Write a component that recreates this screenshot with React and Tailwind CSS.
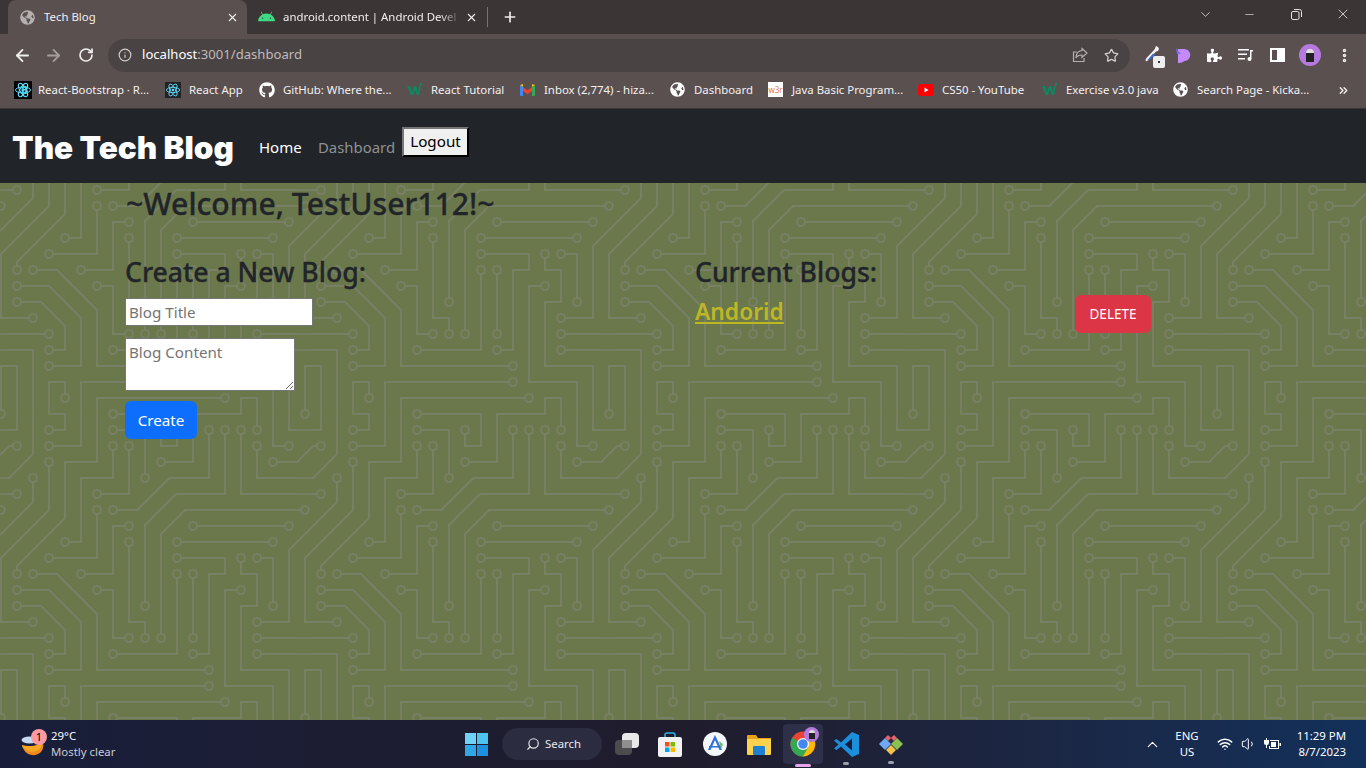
import React from "react";
import { ArrowLeft, ArrowRight, RotateCw, Info, Star, Plus, X, ChevronDown, Minus, ChevronUp, ChevronsRight, EllipsisVertical, Search, Volume1, Wifi } from "lucide-react";
import { FaGithub, FaAndroid, FaGlobeAmericas, FaPuzzlePiece } from "react-icons/fa";

const circuit =
  "M44.1 224a5 5 0 1 1 0 2H0v-2h44.1zm160 48a5 5 0 1 1 0 2H82v-2h122.1zm57.8-46a5 5 0 1 1 0-2H304v2h-42.1zm0 16a5 5 0 1 1 0-2H304v2h-42.1zm6.2-114a5 5 0 1 1 0 2h-86.2a5 5 0 1 1 0-2h86.2zm-256-48a5 5 0 1 1 0 2H0v-2h12.1zm185.8 34a5 5 0 1 1 0-2h86.2a5 5 0 1 1 0 2h-86.2zM258 12.1a5 5 0 1 1-2 0V0h2v12.1zm-64 208a5 5 0 1 1-2 0v-54.2a5 5 0 1 1 2 0v54.2zm48-198.2V80h62v2h-64V21.9a5 5 0 1 1 2 0zm16 16V64h46v2h-48V37.9a5 5 0 1 1 2 0zm-128 96V208h16v12.1a5 5 0 1 1-2 0V210h-16v-76.1a5 5 0 1 1 2 0zm-5.9-21.9a5 5 0 1 1 0 2H114v48H85.9a5 5 0 1 1 0-2H112v-48h12.1zm-6.2 130a5 5 0 1 1 0-2H176v-74.1a5 5 0 1 1 2 0V242h-60.1zm-16-64a5 5 0 1 1 0-2H114v48h10.1a5 5 0 1 1 0 2H112v-48h-10.1zM66 284.1a5 5 0 1 1-2 0V274H50v30h-2v-32h18v12.1zM236.1 176a5 5 0 1 1 0 2H226v94h48v32h-2v-30h-48v-98h12.1zm25.8-30a5 5 0 1 1 0-2H274v44.1a5 5 0 1 1-2 0V146h-10.1zm-64 96a5 5 0 1 1 0-2H208v-80h16v-14h-42.1a5 5 0 1 1 0-2H226v18h-16v80h-12.1zm86.2-210a5 5 0 1 1 0 2H272V0h2v32h10.1zM98 101.9V146H53.9a5 5 0 1 1 0-2H96v-42.1a5 5 0 1 1 2 0zM53.9 34a5 5 0 1 1 0-2H80V0h2v34H53.9zm60.1 3.9V66H82v64H69.9a5 5 0 1 1 0-2H80V64h32V37.9a5 5 0 1 1 2 0zM101.9 82a5 5 0 1 1 0-2H128V37.9a5 5 0 1 1 2 0V82h-28.1zm16-64a5 5 0 1 1 0-2H146v44.1a5 5 0 1 1-2 0V18h-26.1zm102.2 270a5 5 0 1 1 0 2H98v14h-2v-16h124.1zM242 149.9V160h16v34h-16v62h48v48h-2v-46h-48v-66h16v-30h-16v-12.1a5 5 0 1 1 2 0zM53.9 18a5 5 0 1 1 0-2H64V2H48V0h18v18H53.9zm112 32a5 5 0 1 1 0-2H192V0h50v2h-48v48h-28.1zm-48-48a5 5 0 0 1-9.8-2h2.07a3 3 0 1 0 5.66 0H178v34h-18V21.9a5 5 0 1 1 2 0V32h14V2h-58.1zm0 96a5 5 0 1 1 0-2H137l32-32h39V21.9a5 5 0 1 1 2 0V66h-40.17l-32 32H117.9zm28.1 90.1a5 5 0 1 1-2 0v-76.51L175.59 80H224V21.9a5 5 0 1 1 2 0V82h-49.59L146 112.41v75.69zm16 32a5 5 0 1 1-2 0v-99.51L184.59 96H300.1a5 5 0 0 1 3.9-3.9v2.07a3 3 0 0 0 0 5.66v2.07a5 5 0 0 1-3.9-3.9H185.41L162 121.41v98.69zm-144-64a5 5 0 1 1-2 0v-3.51l48-48V48h32V0h2v50H66v55.41l-48 48v2.69zM50 53.9v43.51l-48 48V208h26.1a5 5 0 1 1 0 2H0v-65.41l48-48V53.9a5 5 0 1 1 2 0zm-16 16V89.41l-34 34v-2.82l32-32V69.9a5 5 0 1 1 2 0zM12.1 32a5 5 0 1 1 0 2H9.41L0 43.41V40.6L8.59 32h3.51zm265.8 18a5 5 0 1 1 0-2h18.69l7.41-7.41v2.82L297.41 50H277.9zm-16 160a5 5 0 1 1 0-2H288v-71.41l16-16v2.82l-14 14V210h-28.1zm-208 32a5 5 0 1 1 0-2H64v-22.59L40.59 194H21.9a5 5 0 1 1 0-2H41.41L66 216.59V242H53.9zm150.2 14a5 5 0 1 1 0 2H96v-56.6L56.6 162H37.9a5 5 0 1 1 0-2h19.5L98 200.6V256h106.1zm-150.2 2a5 5 0 1 1 0-2H80v-46.59L48.59 178H21.9a5 5 0 1 1 0-2H49.41L82 208.59V258H53.9zM34 39.8v1.61L9.41 66H0v-2h8.59L32 40.59V0h2v39.8zM2 300.1a5 5 0 0 1 3.9 3.9H3.83A3 3 0 0 0 0 302.17V256h18v48h-2v-46H2v42.1zM34 241v63h-2v-62H0v-2h34v1zM17 18H0v-2h16V0h2v18h-1zm273-2h14v2h-16V0h2v16zm-32 273v15h-2v-14h-14v14h-2v-16h18v1zM0 92.1A5.02 5.02 0 0 1 6 97a5 5 0 0 1-6 4.9v-2.07a3 3 0 1 0 0-5.66V92.1zM80 272h2v32h-2v-32zm37.9 32h-2.07a3 3 0 0 0-5.66 0h-2.07a5 5 0 0 1 9.8 0zM5.9 0A5.02 5.02 0 0 1 0 5.9V3.83A3 3 0 0 0 3.83 0H5.9zm294.2 0h2.07A3 3 0 0 0 304 3.83V5.9a5 5 0 0 1-3.9-5.9zm3.9 300.1v2.07a3 3 0 0 0-1.83 1.83h-2.07a5 5 0 0 1 3.9-3.9z";

// the pads in the path are solid, walk it and find each centre so they can be punched out
function padCentres(d) {
  const tokens = d.match(/[a-zA-Z]|-?\d*\.?\d+/g);
  const argCount = { m: 2, l: 2, h: 1, v: 1, a: 7, z: 0 };
  const centres = [];
  let x = 0;
  let y = 0;
  let sx = 0;
  let sy = 0;
  let cmd = "";
  let i = 0;
  while (i < tokens.length) {
    if (/[a-zA-Z]/.test(tokens[i])) cmd = tokens[i++];
    const rel = cmd === cmd.toLowerCase();
    const c = cmd.toLowerCase();
    if (c === "z") {
      x = sx;
      y = sy;
      continue;
    }
    const p = tokens.slice(i, i + argCount[c]).map(Number);
    i += argCount[c];
    if (c === "m" || c === "l") {
      x = rel ? x + p[0] : p[0];
      y = rel ? y + p[1] : p[1];
      if (c === "m") {
        sx = x;
        sy = y;
        cmd = rel ? "l" : "L";
      }
    } else if (c === "h") {
      x = rel ? x + p[0] : p[0];
    } else if (c === "v") {
      y = rel ? y + p[0] : p[0];
    } else {
      const ex = rel ? x + p[5] : p[5];
      const ey = rel ? y + p[6] : p[6];
      if (p[0] === 5 && p[3] === 1) {
        const mx = (x + ex) / 2;
        const my = (y + ey) / 2;
        const dx = ex - x;
        const dy = ey - y;
        const len = Math.hypot(dx, dy);
        const h = Math.sqrt(Math.max(0, 25 - (len * len) / 4));
        const sign = p[4] === p[3] ? -1 : 1;
        centres.push([mx + (sign * h * -dy) / len, my + (sign * h * dx) / len]);
      }
      x = ex;
      y = ey;
    }
  }
  return centres;
}

const pads = padCentres(circuit);

function W3() {
  return <span className="w-[15px] h-[15px] bg-white text-[8px] leading-[15px] text-center text-[#e8793a]">w3r</span>;
}

function Wr() {
  return (
    <svg width="16" height="13" viewBox="0 0 16 13">
      <path d="M0 3h3l2 6 2-6h2l2 6 1-6h2l-2 9h-2L8 7l-2 5H4z" fill="#0b8a5f" />
      <path d="M13 0h2v2.500h-2z" fill="#0b8a5f" />
    </svg>
  );
}

function Gmail() {
  return (
    <svg width="15" height="12" viewBox="0 0 15 12">
      <path d="M0 1l3 2v9H1a1 1 0 0 1-1-1z" fill="#4285f4" />
      <path d="M15 1l-3 2v9h2a1 1 0 0 0 1-1z" fill="#34a853" />
      <path d="M3 3v4l4.500 3.200L12 7V3L7.500 6.200z" fill="#ea4335" />
      <path d="M0 1l3 2V0zM15 1l-3 2V0z" fill="#fbbc04" />
    </svg>
  );
}

function Atom({ size, bg }) {
  return (
    <svg width={size} height={size} viewBox="0 0 18 18" style={{ background: bg }}>
      <g fill="none" stroke="#61dafb" strokeWidth="1">
        <ellipse cx="9" cy="9" rx="7.500" ry="3" />
        <ellipse cx="9" cy="9" rx="7.500" ry="3" transform="rotate(60 9 9)" />
        <ellipse cx="9" cy="9" rx="7.500" ry="3" transform="rotate(120 9 9)" />
      </g>
      <circle cx="9" cy="9" r="1.500" fill="#61dafb" />
    </svg>
  );
}

function Yt() {
  return (
    <svg width="16" height="12" viewBox="0 0 16 12">
      <rect width="16" height="12" rx="3" fill="#f00" />
      <path d="M6.500 3.500l4 2.500-4 2.500z" fill="#fff" />
    </svg>
  );
}

const bookmarks = [
  {
    label: "React-Bootstrap · R...",
    w: "w-[151px]",
    icon: (
      <span className="relative w-[17px] h-[18px]">
        <Atom size={18} bg="#000" />
        <span className="absolute left-[7px] top-[2px] text-[#4fd1e8] text-[11px] leading-[14px] font-bold">B</span>
      </span>
    ),
  },
  { label: "React App", w: "w-[94px]", icon: <Atom size={16} bg="#222" /> },
  { label: "GitHub: Where the...", w: "w-[148px]", icon: <FaGithub className="text-white" size={16} /> },
  { label: "React Tutorial", w: "w-[113px]", icon: <Wr /> },
  { label: "Inbox (2,774) - hiza...", w: "w-[150px]", icon: <Gmail /> },
  { label: "Dashboard", w: "w-[98px]", icon: <FaGlobeAmericas className="text-white" size={15} /> },
  { label: "Java Basic Program...", w: "w-[150px]", icon: <W3 /> },
  { label: "CS50 - YouTube", w: "w-[124px]", icon: <Yt /> },
  { label: "Exercise v3.0 java", w: "w-[131px]", icon: <Wr /> },
  { label: "Search Page - Kicka...", w: "w-[165px]", icon: <FaGlobeAmericas className="text-white" size={15} /> },
];

function TabStrip() {
  return (
    <div className="h-[34px] bg-[#3b3536] flex items-end pl-[8px] text-[11.4px] text-[#f1eeee]">
      <div className="w-[239px] h-[34px] bg-[#5a5050] rounded-t-lg flex items-center pl-[12px] pr-[8px]">
        <FaGlobeAmericas className="text-[#b5afaf] mr-[9px]" size={15} />
        <span className="flex-1">Tech Blog</span>
        <X size={13} strokeWidth={2} />
      </div>
      <div className="w-[240px] h-[34px] flex items-center pl-[11px] pr-[9px]">
        <FaAndroid className="text-[#3ddc84] mr-[8px]" size={17} />
        <span className="flex-1 whitespace-nowrap [mask-image:linear-gradient(to_right,black_88%,transparent)]">
          android.content | Android Devel
        </span>
        <X size={13} strokeWidth={2} className="ml-[4px]" />
      </div>
      <div className="w-px h-[20px] bg-[#7a7272] mb-[7px]" />
      <div className="h-[34px] flex items-center ml-[14px]">
        <Plus size={16} strokeWidth={2.5} />
      </div>
      <div className="ml-auto self-start h-[28px] flex items-center text-[#e6e2e2]">
        <ChevronDown size={15} strokeWidth={1.25} className="mr-[30px]" />
        <Minus size={13} strokeWidth={1.25} className="mr-[35px]" />
        <svg width="11" height="11" viewBox="0 0 11 11" fill="none" stroke="#e6e2e2" className="mr-[33px]">
          <rect x="0.500" y="2.500" width="7.500" height="8" rx="1.500" />
          <path d="M3 .5h5.500a2 2 0 0 1 2 2V8" />
        </svg>
        <X size={16} strokeWidth={1.25} className="mr-[15px]" />
      </div>
    </div>
  );
}

function Toolbar() {
  return (
    <div className="h-[38px] bg-[#5a5050] flex items-center pt-[4px] text-[#f1eeee]">
      <ArrowLeft size={19} strokeWidth={2.25} className="ml-[13px]" />
      <ArrowRight size={19} strokeWidth={2.25} className="ml-[12px] text-[#a59e9e]" />
      <RotateCw size={16} strokeWidth={2.5} className="ml-[15px]" />
      <div className="ml-[14px] w-[1022px] h-[33px] rounded-full bg-[#4a4343] flex items-center pl-[10px] pr-[10px]">
        <Info size={14} className="text-[#d3cfcf]" />
        <span className="ml-[10px] text-[13.1px] text-white flex-1">
          localhost<span className="text-[#c0baba]">:3001/dashboard</span>
        </span>
        <svg width="16" height="16" viewBox="0 0 16 16" fill="none" stroke="#b5afaf" strokeWidth="1.2" className="mr-[16px]">
          <path d="M10 1.500l5 4.500-5 4.500V8C7 8 5 9 4 11c0-4 2-7 6-7.500z" />
          <path d="M12 11v3.500H1.500V5H5" />
        </svg>
        <Star size={15} className="text-[#d3cfcf] mr-[1px]" />
      </div>
      <div className="relative ml-[14px] w-[20px] h-[20px]">
        <svg width="18" height="18" viewBox="0 0 18 18">
          <path d="M12 1l2 1 1 2-1 2-2 .500-8 9-2 1-.500-1.500 1-2 8-8.500z" fill="#f4f4f4" />
          <path d="M9 8.500L11 10l-6 5-2 .500z" fill="#3b6fd8" />
        </svg>
        <span className="absolute left-[9px] top-[11px] w-[12px] h-[12px] bg-[#eee] rounded-[2px] flex items-center justify-center">
          <span className="w-[2px] h-[2px] bg-[#333]" />
        </span>
      </div>
      <svg width="16" height="17" viewBox="0 0 16 17" className="ml-[11px]">
        <path d="M3 2h6a6 6 0 0 1 .500 12 8 8 0 0 1-6.500 2z" fill="#c58af9" />
        <path d="M1 1l5 6H2z" fill="#7d6cf0" />
      </svg>
      <FaPuzzlePiece size={15} className="ml-[16px] text-white" />
      <svg width="16" height="14" viewBox="0 0 16 14" className="ml-[16px]" fill="white">
        <path d="M0 1h11v1.500H0zM0 5.500h9V7H0zM0 10h7v1.500H0z" />
        <path d="M12 2h3v1.500h-1.500v7.500a2 2 0 1 1-1.500-2z" />
      </svg>
      <span className="ml-[16px] w-[15px] h-[14px] border-2 border-white flex justify-end">
        <span className="w-[6px] h-full bg-white" />
      </span>
      <span className="ml-[14px] w-[22px] h-[22px] rounded-full bg-[#b57ade] flex items-center justify-center">
        <span className="w-[8px] h-[13px] rounded-t-full bg-[#222] border-t-[4px] border-[#ddd]" />
      </span>
      <EllipsisVertical size={17} strokeWidth={3} className="ml-[15px]" />
    </div>
  );
}

function Bookmarks() {
  return (
    <div className="h-[36px] bg-[#5a5050] flex items-center pl-[14px] text-[11.4px] text-[#f4f1f1] border-b border-[#3b3536] box-content">
      {bookmarks.map((b) => (
        <div key={b.label} className={`${b.w} flex items-center shrink-0`}>
          <span className="w-[24px] flex items-center shrink-0">{b.icon}</span>
          <span className="whitespace-nowrap">{b.label}</span>
        </div>
      ))}
      <ChevronsRight size={13} strokeWidth={2.5} className="ml-[-1px]" />
    </div>
  );
}

function Navbar() {
  return (
    <nav className="h-[74px] bg-[#212529] flex items-start pl-[12px]">
      <span className="mt-[17px] font-['Inter',sans-serif] font-black text-[31.5px] leading-[44px] text-white w-[247px] whitespace-nowrap">
        The Tech Blog
      </span>
      <span className="mt-[26px] text-[15px] leading-[24px] text-white w-[59px]">Home</span>
      <span className="mt-[26px] text-[14.9px] leading-[24px] text-[#8f9193] w-[84px]">Dashboard</span>
      <button className="mt-[18px] w-[67px] h-[30px] pb-[2px] bg-[#f0f0f0] text-black text-[15.2px] leading-[22px] border-2 border-t-[#767676] border-l-[#767676] border-r-black border-b-black">
        Logout
      </button>
    </nav>
  );
}

function Dashboard() {
  return (
    <main className="relative flex-1 bg-[#6a784c] overflow-hidden text-[#212529]">
      <svg className="absolute inset-0 w-full h-full" aria-hidden="true">
        <defs>
          {/* tile starts at the top of the page body, 74px above this panel */}
          <pattern id="circuit" y="-74" width="304" height="304" patternUnits="userSpaceOnUse">
            <path d={circuit} fill="#7b8069" fillRule="evenodd" stroke="#6a784c" strokeWidth="0.3" />
            {pads.map(([cx, cy], i) => (
              <circle key={i} cx={cx} cy={cy} r="3.150" fill="#6a784c" />
            ))}
          </pattern>
        </defs>
        <rect width="100%" height="100%" fill="url(#circuit)" />
      </svg>
      <div className="relative pl-[125px]">
        <h2 className="text-[30.2px] leading-[42px] font-medium pl-px [-webkit-text-stroke:0.3px_#212529]">~Welcome, TestUser112!~</h2>
        <div className="flex mt-[26px]">
          <section className="w-[570px]">
            <h3 className="text-[26.6px] leading-[42px] font-medium [-webkit-text-stroke:0.3px_#212529]">Create a New Blog:</h3>
            <input
              placeholder="Blog Title"
              className="block w-[188px] h-[28px] mt-[5px] bg-white px-[3px] text-[15.2px] placeholder:text-[#757575] border border-[#767676]"
            />
            <textarea
              placeholder="Blog Content"
              className="block w-[170px] h-[53px] mt-[12px] bg-white px-[3px] py-[2px] text-[15.2px] placeholder:text-[#757575] border border-[#767676]"
            />
            <button className="block w-[72px] h-[38px] mt-[10px] bg-[#0d6efd] rounded-md text-white text-[15.2px]">Create</button>
          </section>
          <section className="w-[456px]">
            <h3 className="text-[26.6px] leading-[42px] font-medium [-webkit-text-stroke:0.3px_#212529]">Current Blogs:</h3>
            <div className="flex justify-between items-start mt-[1px]">
              <a className="text-[22.8px] leading-[36px] font-semibold text-[#bdb726] underline">Andorid</a>
              <button className="w-[76px] h-[38px] mt-[1px] bg-[#dc3545] rounded-md text-white text-[13.5px]">DELETE</button>
            </div>
          </section>
        </div>
      </div>
    </main>
  );
}

function Taskbar() {
  return (
    <footer className="h-[48px] bg-gradient-to-r from-[#181e3a] via-[#1f1c2c] to-[#12305a] flex items-center text-white text-[11.4px]">
      <div className="relative ml-[20px] w-[31px] h-[30px]">
        <svg width="26" height="26" viewBox="0 0 26 26" className="absolute left-0 top-[3px]">
          <path d="M20 12a9 9 0 0 0 3-1 11 11 0 0 1-20 5c-1-1-1-2-1-3 6 2 13 1 18-1z" fill="#f5a623" />
          <path d="M2 13a11 11 0 0 0 21-2 10 10 0 0 1-2 9 11 11 0 0 1-17-2z" fill="#f08a1d" />
          <ellipse cx="9.500" cy="8" rx="8" ry="3.500" fill="#c6d9ee" />
        </svg>
        <span className="absolute left-[11px] top-0 w-[16px] h-[16px] rounded-full bg-[#fb9aa2] text-black text-[11px] leading-[16px] text-center">1</span>
      </div>
      <div className="w-[100px] leading-[16px]">
        <div>29°C</div>
        <div className="text-[#c9cbd4]">Mostly clear</div>
      </div>
      {/* centre icons */}
      <div className="ml-[314px] grid grid-cols-2 gap-[1px] w-[23px] h-[23px]">
        <span className="bg-[#6fd3f7]" />
        <span className="bg-[#4fc3f0]" />
        <span className="bg-[#2fa6e6]" />
        <span className="bg-[#1e90e0]" />
      </div>
      <div className="ml-[14px] w-[100px] h-[32px] rounded-full bg-[#2b2c40] flex items-center pl-[24px] text-[#e8e8ee]">
        <Search size={14} className="-scale-x-100 mr-[5px]" />
        Search
      </div>
      <div className="relative ml-[13px] w-[24px] h-[22px]">
        <span className="absolute left-0 bottom-0 w-[17px] h-[15px] bg-[#4c4c4c] rounded-sm" />
        <span className="absolute right-0 top-0 w-[17px] h-[15px] bg-[#e9e9e9] rounded-sm" />
        <span className="absolute left-[7px] top-[7px] w-[10px] h-[8px] bg-[#8f8f8f]" />
      </div>
      <svg width="24" height="25" viewBox="0 0 24 25" className="ml-[19px]">
        <path d="M7 6V3a2 2 0 0 1 2-2h6a2 2 0 0 1 2 2v3" fill="none" stroke="#2fb4e8" strokeWidth="1.500" />
        <rect y="5" width="24" height="20" rx="2" fill="#f2f2f2" />
        <rect x="7" y="10" width="4.500" height="4.500" fill="#f25022" />
        <rect x="12.500" y="10" width="4.500" height="4.500" fill="#7fba00" />
        <rect x="7" y="15.500" width="4.500" height="4.500" fill="#00a4ef" />
        <rect x="12.500" y="15.500" width="4.500" height="4.500" fill="#ffb900" />
      </svg>
      <svg width="24" height="24" viewBox="0 0 24 24" className="ml-[21px]">
        <circle cx="12" cy="12" r="12" fill="#f4f7fb" />
        <path d="M12 3l7 15h-2.500L12 8l-4.500 10H5z" fill="#2f6fd8" />
        <path d="M6 14h12v1.500H6z" fill="#2f6fd8" />
        <path d="M16 9l4 3-2 5z" fill="#6cc070" />
      </svg>
      <svg width="24" height="21" viewBox="0 0 24 21" className="ml-[20px]">
        <path d="M0 2a1 1 0 0 1 1-1h8l2 3h13v3H0z" fill="#e8a317" />
        <rect y="5" width="24" height="16" rx="1" fill="#ffd24d" />
        <rect x="6" y="12" width="12" height="9" rx="1" fill="#1f7fd0" />
      </svg>
      <div className="relative ml-[12px] w-[40px] h-[40px] rounded-[4px] bg-[#2d3048] flex items-center justify-center">
        <svg width="26" height="26" viewBox="0 0 26 26">
          <circle cx="13" cy="13" r="12.500" fill="#ea4335" />
          <path d="M13 13L2.200 6.700A12.500 12.500 0 0 0 13 25.500l5.500-8z" fill="#34a853" />
          <path d="M13 7.500h10.800A12.500 12.500 0 0 1 13 25.500l5-9z" fill="#fbbc04" />
          <circle cx="13" cy="13" r="6" fill="#fff" />
          <circle cx="13" cy="13" r="4.800" fill="#4285f4" />
        </svg>
        <span className="absolute left-[21px] top-[3px] w-[15px] h-[15px] rounded-full bg-[#b57ade] flex items-center justify-center">
          <span className="w-[6px] h-[9px] rounded-t-full bg-[#222] border-t-[3px] border-[#ddd]" />
        </span>
        <span className="absolute left-[12px] bottom-[-3px] w-[16px] h-[3px] rounded-full bg-[#e3a6e8]" />
      </div>
      <div className="relative ml-[11px] w-[25px] h-[25px]">
        <svg width="25" height="25" viewBox="0 0 25 25">
          <path d="M18 0l7 3v19l-7 3L7 14.500 2.500 18 0 16.500 4.500 12.500 0 8.500 2.500 7 7 10.500z" fill="#1c8fdc" />
          <path d="M18 6.500L11 12.500l7 6z" fill="#181e3a" />
        </svg>
        <span className="absolute left-[9px] bottom-[-8px] w-[6px] h-[3px] rounded-full bg-[#9aa0ac]" />
      </div>
      <div className="relative ml-[20px] w-[24px] h-[24px]">
        <svg width="24" height="24" viewBox="0 0 24 24">
          <rect x="6" y="6" width="12" height="12" transform="rotate(45 12 12)" fill="#2b2c40" />
          <path d="M0 12l6-6 6 6-6 6z" fill="#6fa8f5" />
          <path d="M12 12l6-6 6 6-6 6z" fill="#8cc152" />
          <path d="M6 6l3-3 3 3-3 3z" fill="#e8616b" />
          <path d="M12 6l3-3 3 3-3 3z" fill="#e8616b" />
          <path d="M7 18l5-5 5 5-5 5z" fill="#f2c14e" />
        </svg>
        <span className="absolute left-[9px] bottom-[-8px] w-[6px] h-[3px] rounded-full bg-[#9aa0ac]" />
      </div>
      {/* tray */}
      <ChevronUp size={17} strokeWidth={1.500} className="ml-[241px]" />
      <div className="ml-[9px] w-[34px] text-center leading-[16px]">
        <div>ENG</div>
        <div>US</div>
      </div>
      <Wifi size={16} strokeWidth={2.25} className="ml-[13px]" />
      <Volume1 size={16} strokeWidth={1.500} className="ml-[8px]" />
      <svg width="17" height="13" viewBox="0 0 17 13" className="ml-[7px]" fill="white">
        <path d="M2 0v2H0v3a2 2 0 0 0 2 2v3h1V7a2 2 0 0 0 2-2V2H3V0z" />
        <path d="M6 2h9v9H5V8h1v2h8V3H6z" />
        <path d="M7 4h5v5H7z" />
        <path d="M15.500 5H17v3h-1.500z" />
      </svg>
      <div className="ml-[6px] w-[59px] text-right leading-[16px] whitespace-nowrap">
        <div>11:29 PM</div>
        <div>8/7/2023</div>
      </div>
    </footer>
  );
}

export default function App() {
  return (
    <div className="h-screen w-full overflow-hidden flex flex-col font-['Noto_Sans',sans-serif]">
      <TabStrip />
      <Toolbar />
      <Bookmarks />
      <Navbar />
      <Dashboard />
      <Taskbar />
    </div>
  );
}
